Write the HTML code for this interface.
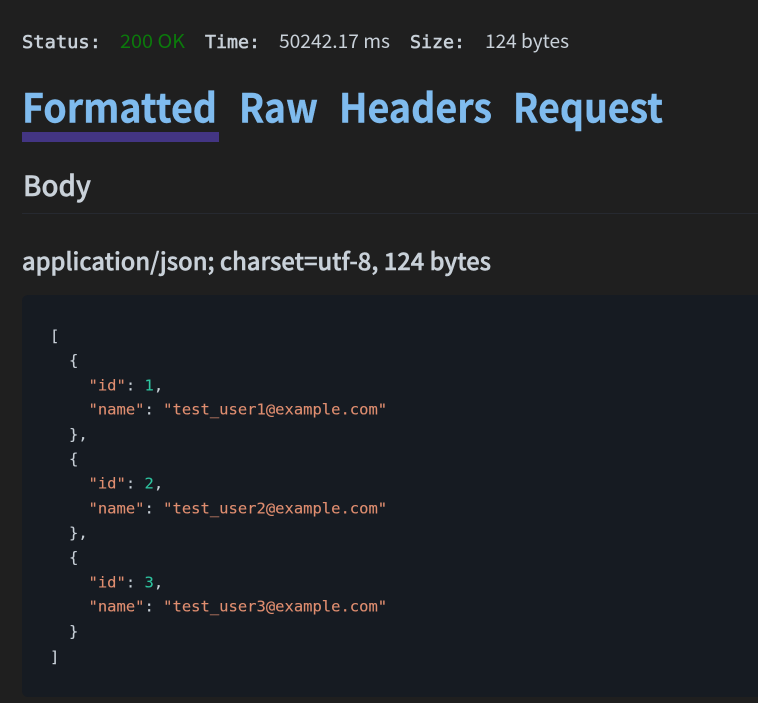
<!DOCTYPE html>
<html>
<head>
<meta charset="utf-8">
<style>
html,body{margin:0;padding:0;width:758px;height:703px;overflow:hidden;background:#1f1f1f}
svg{display:block}
text{white-space:pre}
.m{font-family:"DejaVu Sans Mono",monospace;font-size:15.5px;fill:#c9d1d9;stroke:#c9d1d9;stroke-width:.12px}
.k{fill:#e08e70;stroke:#e08e70}
.n{fill:#2ec4a0;stroke:#2ec4a0}
.h{font-family:"Noto Sans CJK JP","Liberation Sans",sans-serif;font-weight:700;font-size:40px;fill:#7fbbee;stroke:#7fbbee;stroke-width:.4px}
.s{font-family:"Noto Sans CJK JP","Liberation Sans",sans-serif;font-size:19px;fill:#c9d1d9}
.l{font-family:"DejaVu Sans Mono",monospace;font-weight:400;font-size:17.5px;fill:#c9d1d9;stroke:#c9d1d9;stroke-width:.55px}
.b{font-family:"Noto Sans CJK JP","Liberation Sans",sans-serif;font-weight:500;fill:#c9d1d9;stroke:#c9d1d9;stroke-width:.5px}
</style>
</head>
<body>
<svg width="758" height="703" viewBox="0 0 758 703" xmlns="http://www.w3.org/2000/svg">
<rect width="758" height="703" fill="#1f1f1f"/>
<text class="l" x="22" y="48" textLength="79" lengthAdjust="spacingAndGlyphs">Status:</text>
<text class="s" x="120" y="48" textLength="65" lengthAdjust="spacingAndGlyphs" style="fill:#0b7a0b">200 OK</text>
<text class="l" x="205" y="48" textLength="55" lengthAdjust="spacingAndGlyphs">Time:</text>
<text class="s" x="279" y="48" textLength="111" lengthAdjust="spacingAndGlyphs">50242.17 ms</text>
<text class="l" x="410" y="48" textLength="55" lengthAdjust="spacingAndGlyphs">Size:</text>
<text class="s" x="485" y="48" textLength="84" lengthAdjust="spacingAndGlyphs">124 bytes</text>

<text class="h" x="22" y="122.5" textLength="195" lengthAdjust="spacingAndGlyphs">Formatted</text>
<text class="h" x="239" y="122.5" textLength="79" lengthAdjust="spacingAndGlyphs">Raw</text>
<text class="h" x="339" y="122.5" textLength="153" lengthAdjust="spacingAndGlyphs">Headers</text>
<text class="h" x="513" y="122.5" textLength="150" lengthAdjust="spacingAndGlyphs">Request</text>
<rect x="22" y="132" width="197" height="10" fill="#433583"/>

<text class="b" x="23" y="196" font-size="28" textLength="68" lengthAdjust="spacingAndGlyphs">Body</text>
<rect x="22" y="213" width="736" height="1" fill="#262930"/>
<text class="b" x="22" y="270" font-size="24" textLength="469" lengthAdjust="spacingAndGlyphs">application/json; charset=utf-8, 124 bytes</text>

<rect x="22" y="295" width="760" height="402" rx="6" fill="#161b22"/>

<text class="m" x="50" y="341">[</text>
<text class="m" x="69" y="365.5">{</text>
<text class="m" x="88.5" y="390.5"><tspan class="k">"id"</tspan>: <tspan class="n">1</tspan>,</text>
<text class="m" x="88.5" y="414.5"><tspan class="k">"name"</tspan>: <tspan class="k">"test_user1@example.com"</tspan></text>
<text class="m" x="69" y="439.5">},</text>
<text class="m" x="69" y="464">{</text>
<text class="m" x="88.5" y="488.5"><tspan class="k">"id"</tspan>: <tspan class="n">2</tspan>,</text>
<text class="m" x="88.5" y="513.5"><tspan class="k">"name"</tspan>: <tspan class="k">"test_user2@example.com"</tspan></text>
<text class="m" x="69" y="538">},</text>
<text class="m" x="69" y="562.5">{</text>
<text class="m" x="88.5" y="587.5"><tspan class="k">"id"</tspan>: <tspan class="n">3</tspan>,</text>
<text class="m" x="88.5" y="611.5"><tspan class="k">"name"</tspan>: <tspan class="k">"test_user3@example.com"</tspan></text>
<text class="m" x="69" y="636.5">}</text>
<text class="m" x="50" y="662">]</text>
</svg>
</body>
</html>
